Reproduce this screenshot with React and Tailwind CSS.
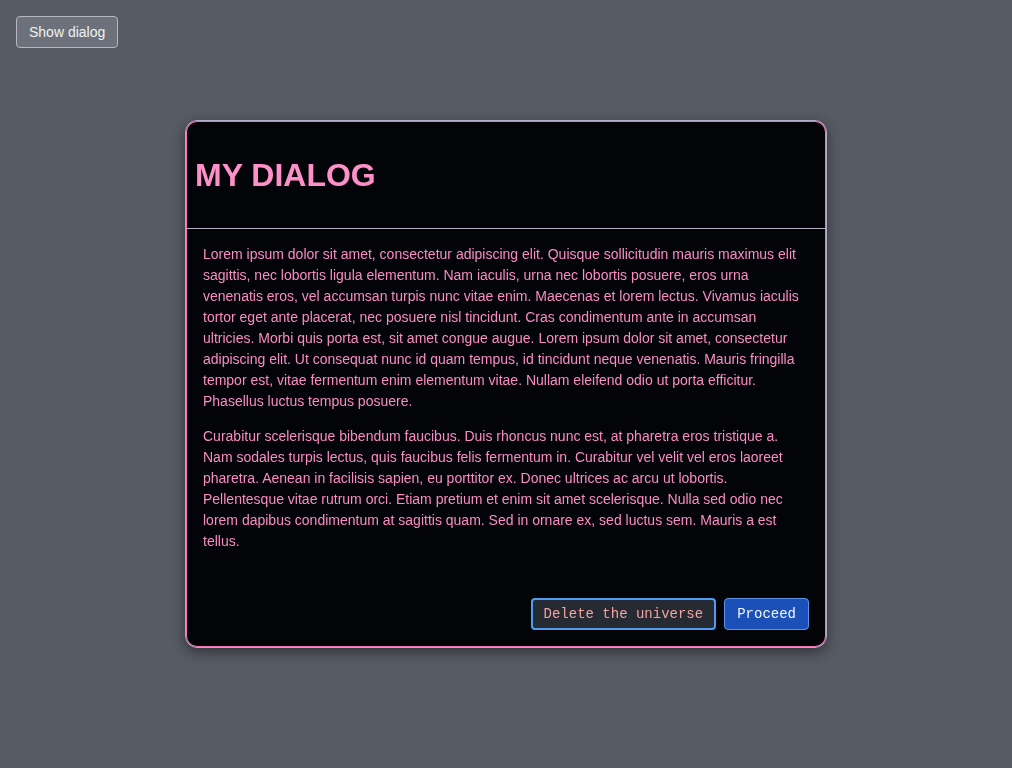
import React, { useState } from 'react';

const para1 = "Lorem ipsum dolor sit amet, consectetur adipiscing elit. Quisque sollicitudin mauris maximus elit sagittis, nec lobortis ligula elementum. Nam iaculis, urna nec lobortis posuere, eros urna venenatis eros, vel accumsan turpis nunc vitae enim. Maecenas et lorem lectus. Vivamus iaculis tortor eget ante placerat, nec posuere nisl tincidunt. Cras condimentum ante in accumsan ultricies. Morbi quis porta est, sit amet congue augue. Lorem ipsum dolor sit amet, consectetur adipiscing elit. Ut consequat nunc id quam tempus, id tincidunt neque venenatis. Mauris fringilla tempor est, vitae fermentum enim elementum vitae. Nullam eleifend odio ut porta efficitur. Phasellus luctus tempus posuere.";
const para2 = "Curabitur scelerisque bibendum faucibus. Duis rhoncus nunc est, at pharetra eros tristique a. Nam sodales turpis lectus, quis faucibus felis fermentum in. Curabitur vel velit vel eros laoreet pharetra. Aenean in facilisis sapien, eu porttitor ex. Donec ultrices ac arcu ut lobortis. Pellentesque vitae rutrum orci. Etiam pretium et enim sit amet scelerisque. Nulla sed odio nec lorem dapibus condimentum at sagittis quam. Sed in ornare ex, sed luctus sem. Mauris a est tellus.";

export default function App() {
    const [open, setOpen] = useState(true);

    return (
        <div className="min-h-screen bg-[#575b64] p-4 font-['Liberation_Sans',Arial,sans-serif]">
            <button
                onClick={() => setOpen(true)}
                className="h-8 px-3 rounded-[4px] border border-[#b4b8c0] bg-[#6c717b] text-[14px] text-[#f2f2f2]"
            >
                Show dialog
            </button>

            {open && (
                <div className="fixed inset-0 flex items-center justify-center">
                    {/* outer lavender line + inner pink line */}
                    <div className="w-[642px] p-px rounded-xl border border-[#b3abc8] bg-[#030408] shadow-[inset_0_0_0_1px_#f472b6,0_4px_14px_rgba(0,0,0,0.45)] flex flex-col">
                        <div className="px-2 py-2 border-b border-[#b4b0c4]">
                            <h2 className="my-[26.5px] text-[32px] leading-[37px] font-bold text-[#ff8fc8]">MY DIALOG</h2>
                        </div>
                        <div className="px-4 pt-px pb-4 text-[14px] leading-[21px] text-[#fa8cc3]">
                            <p className="my-[14px]">{para1}</p>
                            <p className="my-[14px]">{para2}</p>
                        </div>
                        <div className="flex justify-end gap-2 p-4">
                            <button className="h-8 px-[11px] rounded-[4px] border-2 border-[#4a9ff2] bg-[#262a33] font-['Liberation_Mono',monospace] text-[14px] text-[#f3a3a0]">
                                Delete the universe
                            </button>
                            <button
                                onClick={() => setOpen(false)}
                                className="h-8 px-3 rounded-[4px] border border-[#5d92e6] bg-[#1c50b9] font-['Liberation_Mono',monospace] text-[14px] text-[#f4f6fb]"
                            >
                                Proceed
                            </button>
                        </div>
                    </div>
                </div>
            )}
        </div>
    );
}
